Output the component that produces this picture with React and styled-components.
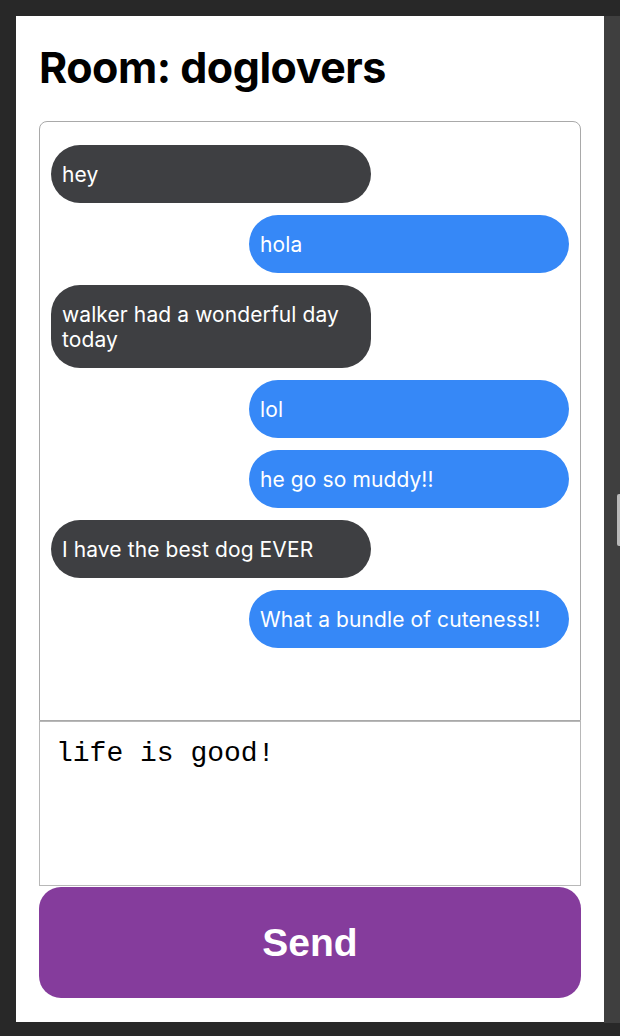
import React from 'react';
import styled, { createGlobalStyle } from 'styled-components';

const GlobalStyle = createGlobalStyle`
  html, body {
    margin: 0;
    padding: 0;
    background: #282828;
  }
  * {
    box-sizing: border-box;
  }
`;

const Frame = styled.div`
  display: flex;
  padding-top: 16px;
  padding-left: 16px;
  height: 1036px;
`;

const Panel = styled.div`
  width: 588px;
  height: 1006px;
  background: #fff;
  padding: 0 23px 24px;
  display: flex;
  flex-direction: column;
`;

const Scrollbar = styled.div`
  width: 16px;
  height: 1007px;
  background: #3f3f3f;
  display: flex;
  justify-content: flex-end;
`;

const Thumb = styled.div`
  width: 3px;
  height: 52px;
  margin-top: 478px;
  background: #b9b9b9;
  border-radius: 2px 0 0 2px;
`;

const Title = styled.h1`
  margin: 25px 0 28px;
  font-family: Inter, "Liberation Sans", sans-serif;
  font-weight: 700;
  font-size: 43px;
  line-height: 52px;
  color: #000;
  letter-spacing: -0.5px;
`;

const Messages = styled.div`
  height: 600px;
  flex-shrink: 0;
  border: 1px solid #a9a9a9;
  border-radius: 8px 8px 0 0;
  padding: 23px 11px;
  display: flex;
  flex-direction: column;
  gap: 12px;
`;

const Bubble = styled.div`
  width: 320px;
  align-self: ${p => (p.$mine ? 'flex-end' : 'flex-start')};
  background: ${p => (p.$mine ? '#3688f7' : '#3e3f42')};
  color: #fff;
  border-radius: 29px;
  padding: 17px 11px 16px;
  font-family: Inter, "Liberation Sans", sans-serif;
  font-size: 21px;
  line-height: 25px;
  letter-spacing: 0.1px;
`;

const Input = styled.textarea`
  display: block;
  width: 100%;
  height: 165px;
  flex-shrink: 0;
  margin: 0;
  border: 1px solid #b8b8b8;
  border-radius: 0;
  padding: 16px 16px;
  resize: none;
  font-family: "Liberation Mono", "Courier New", monospace;
  font-size: 28px;
  line-height: 32px;
  color: #000;
  background: #fff;
  outline: none;
`;

const SendButton = styled.button`
  height: 111px;
  width: 100%;
  flex-shrink: 0;
  margin-top: 1px;
  border: none;
  border-radius: 22px;
  background: #853c9c;
  color: #fff;
  font-family: "Liberation Sans", Arial, sans-serif;
  font-weight: 700;
  font-size: 39px;
  cursor: pointer;
`;

const messages = [
  { text: 'hey', mine: false },
  { text: 'hola', mine: true },
  { text: 'walker had a wonderful day today', mine: false },
  { text: 'lol', mine: true },
  { text: 'he go so muddy!!', mine: true },
  { text: 'I have the best dog EVER', mine: false },
  { text: 'What a bundle of cuteness!!', mine: true },
];

export default function App() {
  return (
    <>
      <GlobalStyle />
      <Frame>
        <Panel>
          <Title>Room: doglovers</Title>
          <Messages>
            {messages.map((m, i) => (
              <Bubble key={i} $mine={m.mine}>{m.text}</Bubble>
            ))}
          </Messages>
          <Input defaultValue="life is good!" />
          <SendButton>Send</SendButton>
        </Panel>
        <Scrollbar>
          <Thumb />
        </Scrollbar>
      </Frame>
    </>
  );
}
